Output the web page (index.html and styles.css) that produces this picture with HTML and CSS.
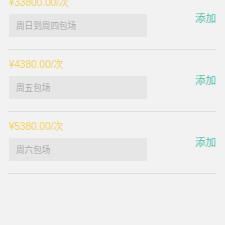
FILE: index.html
```html
<!DOCTYPE html>
<html>
<head>
<meta charset="utf-8">
<link rel="stylesheet" href="styles.css">
</head>
<body>
<div class="list">
  <div class="item">
    <div class="price">¥33800.00/次</div>
    <div class="body">
      <div class="desc">周日到周四包场</div>
      <div class="add">添加</div>
    </div>
  </div>
  <div class="item">
    <div class="price">¥4380.00/次</div>
    <div class="body">
      <div class="desc">周五包场</div>
      <div class="add">添加</div>
    </div>
  </div>
  <div class="item">
    <div class="price">¥5380.00/次</div>
    <div class="body">
      <div class="desc">周六包场</div>
      <div class="add">添加</div>
    </div>
  </div>
</div>
</body>
</html>
```
FILE: styles.css
```css
html, body {
  margin: 0;
  padding: 0;
  background: #f2f2f2;
  height: 100%;
  overflow: hidden;
}
body {
  font-family: "Liberation Sans", "Noto Sans CJK SC", sans-serif;
}
.list {
  margin-top: -12px;
  padding: 0 9px 0 8px;
}
.item {
  padding: 8px 0 12px 1px;
  border-bottom: 1px solid #e1e1e1;
}
.price {
  color: #f4d25a;
  font-size: 10px;
  line-height: 14px;
  height: 14px;
}
.body {
  display: flex;
  justify-content: space-between;
  align-items: flex-start;
}
.desc {
  margin-top: 4px;
  width: 138px;
  height: 23px;
  box-sizing: border-box;
  padding-left: 7px;
  background: #e6e6e6;
  color: #ababab;
  font-size: 8.6px;
  line-height: 23px;
  font-family: "Noto Sans CJK SC", sans-serif;
}
.add {
  color: #4fc5b1;
  font-size: 10.5px;
  line-height: 14px;
  margin-top: 1px;
  font-family: "Noto Sans CJK SC", sans-serif;
}
```
